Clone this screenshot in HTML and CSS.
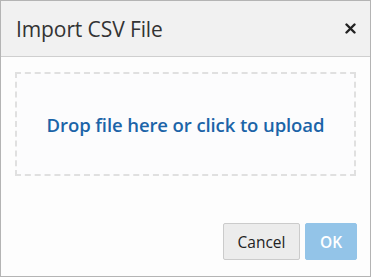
FILE: index.html
```html
<!DOCTYPE html>
<html lang="en">
<head>
  <meta charset="UTF-8">
  <meta name="viewport" content="width=device-width, initial-scale=1.0">
  <title>Import CSV File</title>
  <link rel="stylesheet" href="styles.css">
</head>
<body>

  <div class="dialog">
    <header class="dialog-header">
      <h1>Import CSV File</h1>
      <button class="close" aria-label="Close">
        <svg width="11" height="11" viewBox="0 0 11 11">
          <path d="M1.5 1.5 L9.5 9.5 M9.5 1.5 L1.5 9.5" stroke="#222" stroke-width="2.4" stroke-linecap="round"/>
        </svg>
      </button>
    </header>

    <!-- Vùng kéo thả file -->
    <div class="dialog-body">
      <div class="dropzone">Drop file here or click to upload</div>
    </div>

    <footer class="dialog-footer">
      <button class="btn btn-cancel">Cancel</button>
      <button class="btn btn-ok" disabled>OK</button>
    </footer>
  </div>

</body>
</html>
```

FILE: styles.css
```css
body {
  margin: 0;
  padding: 0;
  background: #fff;
  font-family: "Open Sans", "Noto Sans", sans-serif;
}

.dialog {
  width: 371px;
  height: 277px;
  box-sizing: border-box;
  border: 1px solid #b4b4b4;
  background: #fdfdfd;
  display: flex;
  flex-direction: column;
}

.dialog-header {
  height: 56px;
  box-sizing: border-box;
  background: #f1f1f1;
  border-bottom: 1px solid #cfcfcf;
  display: flex;
  align-items: center;
  justify-content: space-between;
  padding: 0 14px 0 15px;
}

.dialog-header h1 {
  margin: 0;
  font-size: 21px;
  font-weight: normal;
  color: #333;
  letter-spacing: -0.1px;
}

.close {
  background: none;
  border: none;
  padding: 0;
  display: flex;
  cursor: pointer;
}

.dialog-body {
  padding: 15px 14px 0 14px;
}

.dropzone {
  height: 100px;
  border: 2px dashed #e0e0e0;
  background: #fcfcfd;
  display: flex;
  align-items: center;
  justify-content: center;
  color: #1b64a8;
  font-size: 18.5px;
  font-weight: 600;
  letter-spacing: -0.1px;
  cursor: pointer;
}

.dialog-footer {
  margin-top: auto;
  display: flex;
  justify-content: flex-end;
  gap: 5px;
  padding: 0 13px 16px 0;
}

.btn {
  height: 37px;
  font-family: inherit;
  font-size: 15.5px;
  border-radius: 2px;
  cursor: pointer;
}

.btn-cancel {
  width: 77px;
  background: #ececec;
  border: 1px solid #cbcbcb;
  color: #222;
}

.btn-ok {
  width: 52px;
  background: #93c4e8;
  border: 1px solid #93c4e8;
  color: #fff;
  font-weight: 600;
}
```
